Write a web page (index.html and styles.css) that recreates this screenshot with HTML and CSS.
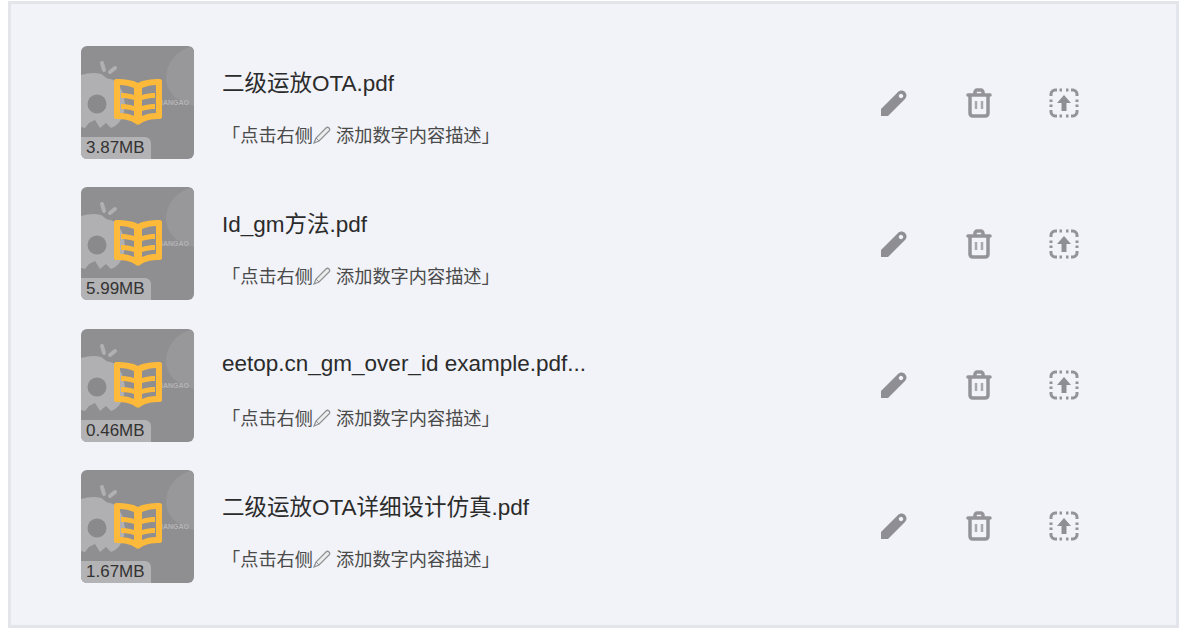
FILE: index.html
```html
<!DOCTYPE html>
<html>
<head>
  <meta charset="UTF-8" />
  <title>文档列表</title>
  <link rel="stylesheet" href="styles.css">
</head>
<body>
  <svg class="defs" width="0" height="0">
    <defs>
      <symbol id="cover" viewBox="0 0 113 113">
        <path d="M0 29c7-2 14-3 20-1 4 2 5 5 9 5 6 1 9 6 12 12 3 8 4 17 1 24-2 6-6 11-12 13l-5-5-6 5-5-8-6 3-4 5-4-1z" fill="#b0afb1"/>
        <circle cx="16" cy="58" r="9.500" fill="#8a898b"/>
        <path d="M21 17l2 7M34 22l-5 4" stroke="#b0afb1" stroke-width="4" stroke-linecap="round"/>
        <path d="M113 0c-16 3-28 16-28 32 0 14 12 25 28 28z" fill="#989799"/>
      </symbol>
      <symbol id="book" viewBox="0 0 48 46">
        <path fill-rule="evenodd" fill="#fdb93a" d="M24 4C19 1 11 0 2 0 1 0 0 1 0 2v36c0 1 1 2 2 2 8 0 15 1 20 5 1 1 3 1 4 0 5-4 12-5 20-5 1 0 2-1 2-2V2c0-1-1-2-2-2-9 0-17 1-22 4zM6 6c5 0 9 1 14 3v28c-4-2-9-3-14-3zM42 6c-5 0-9 1-14 3v28c4-2 9-3 14-3z"/>
        <path fill="#fdb93a" d="M7 14c4 0 8 .500 13 2v5c-5-1.500-9-2-13-2zM7 25c4 0 8 .500 13 2v5c-5-1.500-9-2-13-2zM28 16c5-1.500 9-2 13-2v5c-4 0-8 .500-13 2zM28 27c5-1.500 9-2 13-2v5c-4 0-8 .500-13 2z"/>
      </symbol>
      <symbol id="pencil" viewBox="0 0 26 26">
        <path fill-rule="evenodd" fill="#8f8f93" d="M0 19L17 2c2-2 5-2 7 0s2 5 0 7L7 26H1c-1 0-1 0-1-1zM18.500 4.500c-1 1-1 2 0 3s2 1 3 0 1-2 0-3-2-1-3 0z"/>
      </symbol>
      <symbol id="trash" viewBox="0 0 26 30">
        <path d="M4 8v17c0 2 1 3 3 3h12c2 0 3-1 3-3V8" fill="none" stroke="#949498" stroke-width="3.500"/>
        <path d="M2 7h22M9 6V4c0-1 1-2 2-2h4c1 0 2 1 2 2v2" fill="none" stroke="#949498" stroke-width="3.500" stroke-linecap="round"/>
        <path d="M10 13v8M16 13v8" stroke="#a9a9ad" stroke-width="2.500"/>
      </symbol>
      <symbol id="upload" viewBox="0 0 30 30">
        <path d="M2 8V6c0-2 2-4 4-4h2M22 2h2c2 0 4 2 4 4v2M28 22v2c0 2-2 4-4 4h-2M8 28H6c-2 0-4-2-4-4v-2" fill="none" stroke="#949498" stroke-width="3"/>
        <path d="M10.500 2h2.500M17 2h2.500M10.500 28h2.500M17 28h2.500M2 11.500V14M2 16.500V19M28 11.500V14M28 16.500V19" fill="none" stroke="#949498" stroke-width="3"/>
        <path d="M15 7l7 8h-4.500v8h-5v-8H8z" fill="#8f8f93"/>
      </symbol>
      <symbol id="tinypen" viewBox="0 0 18 18">
        <path d="M1 17l2-5L13 2c1-1 2-1 3 0s1 2 0 3L6 15z" fill="#eceded" stroke="#8f9093" stroke-width="1.200"/>
        <path d="M3 12l3 3" stroke="#8f9093"/>
      </symbol>
    </defs>
  </svg>

  <div class="panel">
    <div class="doc-row">
      <div class="thumb">
        <svg class="thumb-art"><use href="#cover"/></svg>
        <span class="thumb-word">IANGAO</span>
        <svg class="thumb-book"><use href="#book"/></svg>
        <span class="thumb-size">3.87MB</span>
      </div>
      <div class="doc-info">
        <div class="doc-name">二级运放OTA.pdf</div>
        <div class="doc-desc">「点击右侧<svg class="pen"><use href="#tinypen"/></svg> 添加数字内容描述」</div>
      </div>
      <div class="doc-actions">
        <svg class="icon-pencil"><use href="#pencil"/></svg>
        <svg class="icon-trash"><use href="#trash"/></svg>
        <svg class="icon-upload"><use href="#upload"/></svg>
      </div>
    </div>

    <div class="doc-row">
      <div class="thumb">
        <svg class="thumb-art"><use href="#cover"/></svg>
        <span class="thumb-word">IANGAO</span>
        <svg class="thumb-book"><use href="#book"/></svg>
        <span class="thumb-size">5.99MB</span>
      </div>
      <div class="doc-info">
        <div class="doc-name">Id_gm方法.pdf</div>
        <div class="doc-desc">「点击右侧<svg class="pen"><use href="#tinypen"/></svg> 添加数字内容描述」</div>
      </div>
      <div class="doc-actions">
        <svg class="icon-pencil"><use href="#pencil"/></svg>
        <svg class="icon-trash"><use href="#trash"/></svg>
        <svg class="icon-upload"><use href="#upload"/></svg>
      </div>
    </div>

    <div class="doc-row">
      <div class="thumb">
        <svg class="thumb-art"><use href="#cover"/></svg>
        <span class="thumb-word">IANGAO</span>
        <svg class="thumb-book"><use href="#book"/></svg>
        <span class="thumb-size">0.46MB</span>
      </div>
      <div class="doc-info">
        <div class="doc-name doc-name-latin">eetop.cn_gm_over_id example.pdf...</div>
        <div class="doc-desc">「点击右侧<svg class="pen"><use href="#tinypen"/></svg> 添加数字内容描述」</div>
      </div>
      <div class="doc-actions">
        <svg class="icon-pencil"><use href="#pencil"/></svg>
        <svg class="icon-trash"><use href="#trash"/></svg>
        <svg class="icon-upload"><use href="#upload"/></svg>
      </div>
    </div>

    <div class="doc-row">
      <div class="thumb">
        <svg class="thumb-art"><use href="#cover"/></svg>
        <span class="thumb-word">IANGAO</span>
        <svg class="thumb-book"><use href="#book"/></svg>
        <span class="thumb-size">1.67MB</span>
      </div>
      <div class="doc-info">
        <div class="doc-name">二级运放OTA详细设计仿真.pdf</div>
        <div class="doc-desc">「点击右侧<svg class="pen"><use href="#tinypen"/></svg> 添加数字内容描述」</div>
      </div>
      <div class="doc-actions">
        <svg class="icon-pencil"><use href="#pencil"/></svg>
        <svg class="icon-trash"><use href="#trash"/></svg>
        <svg class="icon-upload"><use href="#upload"/></svg>
      </div>
    </div>
  </div>
</body>
</html>
```

FILE: styles.css
```css
html, body {
  margin: 0;
  background: #fff;
}
body {
  padding: 1px 12px 0 8px;
  font-family: "Liberation Sans", "Noto Sans CJK SC", sans-serif;
}
.defs {
  display: block;
  height: 0;
}
.panel {
  box-sizing: border-box;
  height: 627px;
  background: #f1f3f8;
  border: 3px solid #e3e5ea;
  padding: 42px 0 0 70px;
  display: flex;
  flex-direction: column;
  gap: 28.33px;
}
.doc-row {
  display: flex;
  height: 113px;
}
.thumb {
  position: relative;
  flex: 0 0 113px;
  height: 113px;
  border-radius: 6px;
  overflow: hidden;
  background: #8f8e90;
}
.thumb-art {
  position: absolute;
  left: 0;
  top: 0;
  width: 113px;
  height: 113px;
}
.thumb-word {
  position: absolute;
  left: 80px;
  top: 53px;
  font-size: 7px;
  font-weight: bold;
  color: #b5b4b6;
}
.thumb-book {
  position: absolute;
  left: 33px;
  top: 33px;
  width: 48px;
  height: 46px;
}
.thumb-size {
  position: absolute;
  left: 0;
  bottom: 0;
  padding: 0 6px 0 5px;
  height: 22px;
  line-height: 22px;
  font-size: 17px;
  color: #333;
  background: #b3b2b4;
  border-top-right-radius: 6px;
}
.doc-info {
  width: 640px;
  margin-left: 28px;
  padding-top: 19px;
}
.doc-name {
  box-sizing: border-box;
  height: 35px;
  font-size: 22.5px;
  color: #2b2b2b;
  white-space: nowrap;
}
.doc-name-latin {
  padding-top: 3px;
}
.doc-desc {
  margin-top: 23px;
  font-size: 18.2px;
  line-height: 26px;
  color: #4a4a4a;
  white-space: nowrap;
}
.pen {
  width: 18px;
  height: 18px;
  vertical-align: -2px;
}
.doc-actions {
  display: flex;
  align-items: center;
  height: 113px;
}
.icon-pencil {
  width: 26px;
  height: 26px;
  margin-left: 19px;
}
.icon-trash {
  width: 26px;
  height: 30px;
  margin-left: 59px;
}
.icon-upload {
  width: 30px;
  height: 30px;
  margin-left: 57px;
}
```
